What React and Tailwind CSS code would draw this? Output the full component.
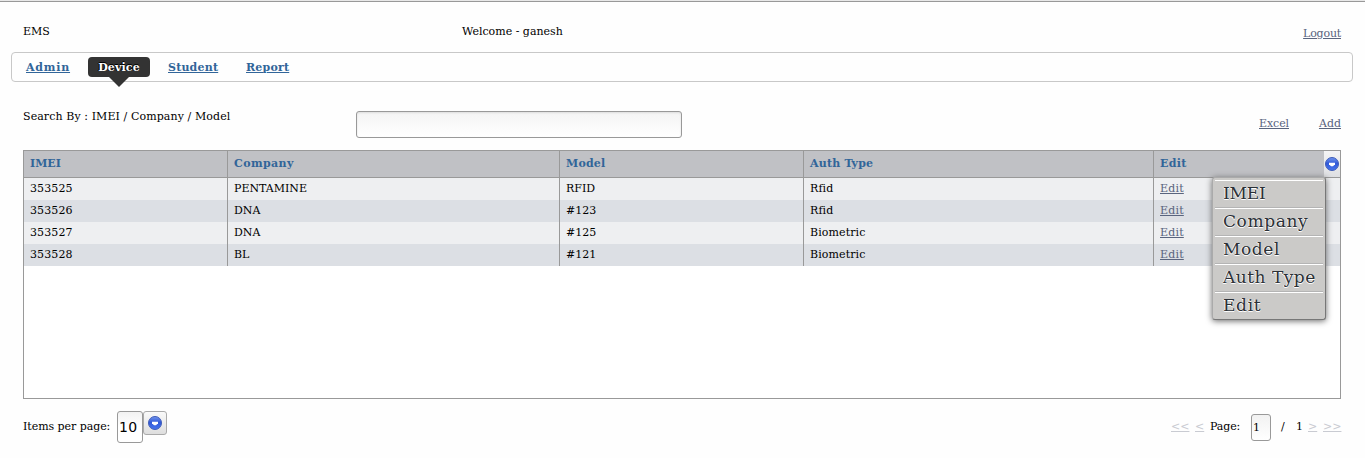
import React from 'react';

const rows = [
  ['353525', 'PENTAMINE', 'RFID', 'Rfid'],
  ['353526', 'DNA', '#123', 'Rfid'],
  ['353527', 'DNA', '#125', 'Biometric'],
  ['353528', 'BL', '#121', 'Biometric'],
];

const columns = [
  { name: 'IMEI', head: '', menu: 'tracking-[-0.2px]' },
  { name: 'Company', head: 'tracking-[0.4px]', menu: 'tracking-[0.6px]' },
  { name: 'Model', head: 'tracking-[0.2px]', menu: 'tracking-[0.6px]' },
  { name: 'Auth Type', head: 'tracking-[0.2px]', menu: 'tracking-[0.5px]' },
  { name: 'Edit', head: 'tracking-[0.3px]', menu: 'tracking-[0.7px]' },
];

const grid = 'grid grid-cols-[204px_332px_244px_350px_186px]';

function Arrow() {
  return (
    <svg width="14" height="14" viewBox="0 0 14 14" className="block shrink-0">
      <defs>
        <linearGradient id="ball" x1="0" y1="0" x2="0" y2="1">
          <stop offset="0" stopColor="#7397ee" />
          <stop offset="0.45" stopColor="#3159d8" />
          <stop offset="1" stopColor="#4675ee" />
        </linearGradient>
      </defs>
      <circle cx="7" cy="7" r="6.5" fill="url(#ball)" stroke="#3f5cb8" />
      <path d="M4 5.8h6v1.4L8 9.2H6L4 7.2z" fill="#fff" />
    </svg>
  );
}

function NavLink({ children, className }) {
  return <a className={`mt-1 font-bold text-[#316599] underline ${className}`}>{children}</a>;
}

export default function App() {
  return (
    <div className="h-[458px] w-[1365px] overflow-hidden bg-[#fefefe] font-['DejaVu_Serif',serif] text-[11px] leading-[14px] text-black">
      <div className="h-[2px] border-b border-[#999] bg-[#e8e8e8]" />
      <header className="flex h-[50px] items-start pl-[23px] pr-6 pt-[23px]">
        <span className="w-[439px]">EMS</span>
        <span className="flex-1">Welcome - ganesh</span>
        <a className="mt-[2px] tracking-[-0.2px] text-[#59647e] underline">Logout</a>
      </header>
      <nav className="ml-[11px] mr-3 flex h-[30px] items-start rounded-[4px] border border-[#c8c8c8] pl-[14px] pt-1">
        <NavLink className="w-[62px] tracking-[0.8px]">Admin</NavLink>
        <div className="relative flex h-5 w-[62px] justify-center rounded-[4px] bg-[#333] pt-1 font-bold tracking-[0.15px] text-white [text-shadow:0_-1px_0_#000,-1px_0_0_#000]">
          Device
          <svg width="20" height="10" viewBox="0 0 20 10" className="absolute left-[21px] top-5">
            <path d="M0 0H20L10 10Z" fill="#333" />
          </svg>
        </div>
        <NavLink className="ml-[18px] w-[78px] tracking-[0.2px]">Student</NavLink>
        <NavLink className="tracking-[0.2px]">Report</NavLink>
      </nav>
      <section className="flex h-[68px] items-start pl-[23px] pr-6 pt-[28px]">
        <span className="w-[333px] tracking-[0.09px]">Search By : IMEI / Company / Model</span>
        <div className="mt-px h-[27px] w-[326px] rounded-[3px] border border-[#999] bg-gradient-to-b from-[#f4f4f4] to-white shadow-[inset_0_1px_2px_#ddd]" />
        <div className="ml-auto mt-[7px] flex gap-[30px] text-[#59647e] underline">
          <a className="tracking-[-0.1px]">Excel</a>
          <a>Add</a>
        </div>
      </section>
      <main className="relative ml-[23px] h-[249px] w-[1318px] border border-[#999] bg-white">
        <div className={`${grid} h-[27px] border-b border-[#999] bg-[#c0c1c5] font-bold text-[#316599]`}>
          {columns.map(({ name, head }, i) => (
            <div key={name} className={`pl-[6px] pt-[6px] ${head} ${i < 4 ? 'border-r border-[#999]' : 'flex justify-between'}`}>
              {name}
              {i === 4 && (
                <div className="-mt-[6px] flex h-[26px] w-4 items-center justify-center bg-gradient-to-b from-[#f5f5f6] to-[#dedfe2]">
                  <Arrow />
                </div>
              )}
            </div>
          ))}
        </div>
        {rows.map((r, i) => (
          <div key={r[0]} className={`${grid} h-[22px] ${i % 2 ? 'bg-[#dcdfe4]' : 'bg-[#eeeff1]'}`}>
            {r.map((c, j) => (
              <div key={j} className={`border-r border-[#999] pl-[6px] pt-1 ${j === 0 || j === 3 ? 'tracking-[0.1px]' : ''}`}>{c}</div>
            ))}
            <a className="pl-[6px] pt-1 tracking-[0.2px] text-[#59647e] underline">Edit</a>
          </div>
        ))}
        <div className="absolute left-[1188px] top-[26px] h-[143px] w-[114px] rounded-[3px] border border-[#aaa] border-b-[#777] border-r-[#777] bg-[#cbcac8] px-[2px] pt-[2px] text-[17px] leading-[24px] text-[#2b3036] shadow-[0_1px_6px_#666] [text-shadow:0_1px_0_#fff,-1px_0_0_#eee]">
          {columns.map(({ name, menu }, i) => (
            <div key={name} className={`h-7 whitespace-nowrap border-t border-t-white pl-2 ${menu} ${i < 4 ? 'border-b border-b-[#b4b4b4] bg-clip-padding' : ''}`}>{name}</div>
          ))}
        </div>
      </main>
      <footer className="flex items-start pl-[23px] pr-6 pt-3">
        <span className="mt-[9px] w-[94px] tracking-[-0.05px]">Items per page:</span>
        <div className="h-8 w-[26px] rounded-[3px] border border-[#999] bg-gradient-to-b from-[#f2f2f2] to-white to-50% pl-px pt-[7px] font-['DejaVu_Sans',sans-serif] text-[14px] leading-4 tracking-[0.3px]">10</div>
        <div className="flex h-6 w-6 items-center justify-center rounded-[3px] border border-[#aaa] bg-gradient-to-b from-[#fafafa] to-[#dedede]">
          <Arrow />
        </div>
        <div className="ml-auto flex items-start pt-[9px]">
          <span className="w-6 text-[#c9cbd2] underline">&lt;&lt;</span>
          <span className="w-[15px] text-[#c9cbd2] underline">&lt;</span>
          <span className="w-[41px] tracking-[-0.1px]">Page:</span>
          <div className="-mt-[6px] h-[27px] w-5 rounded-[3px] border border-[#999] bg-gradient-to-b from-[#f2f2f2] to-white pl-[1px] pt-[6px]">1</div>
          <span className="ml-[10px] w-[15px]">/</span>
          <span className="w-3">1</span>
          <span className="w-[15px] text-[#c9cbd2] underline">&gt;</span>
          <span className="w-[18px] text-[#c9cbd2] underline">&gt;&gt;</span>
        </div>
      </footer>
    </div>
  );
}
